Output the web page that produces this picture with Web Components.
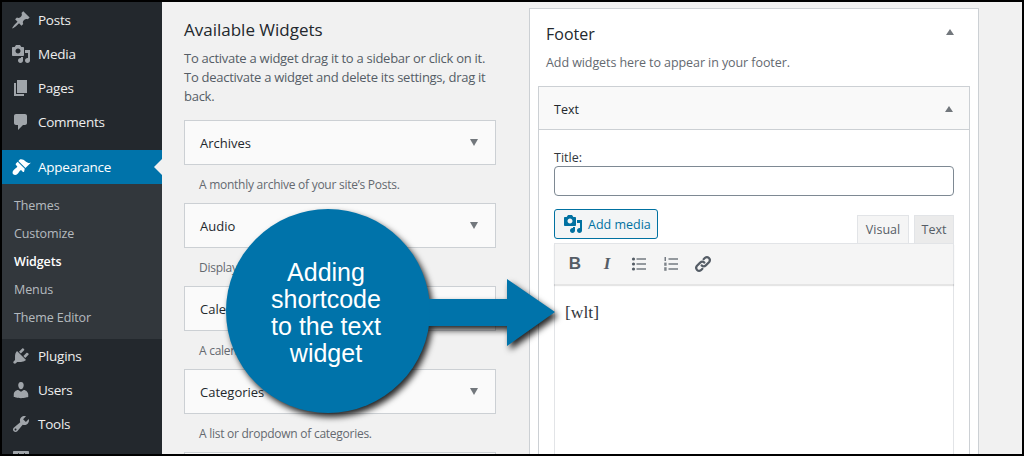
<!DOCTYPE html>
<html lang="en">
<head>
<meta charset="utf-8">
<title>Widgets</title>
<style>
  html, body { margin: 0; height: 456px; overflow: hidden; background: #000; }
  body { font-family: "Open Sans", "Noto Sans", sans-serif; font-size: 13px; }
</style>
</head>
<body>
<wp-frame>
  <wp-sidebar slot="side">
    <wp-menu-item icon="post">Posts</wp-menu-item>
    <wp-menu-item icon="media">Media</wp-menu-item>
    <wp-menu-item icon="page">Pages</wp-menu-item>
    <wp-menu-item icon="comments">Comments</wp-menu-item>
    <wp-menu-item icon="appearance" current>Appearance</wp-menu-item>
    <wp-submenu>
      <wp-sub-item>Themes</wp-sub-item>
      <wp-sub-item>Customize</wp-sub-item>
      <wp-sub-item active>Widgets</wp-sub-item>
      <wp-sub-item>Menus</wp-sub-item>
      <wp-sub-item>Theme Editor</wp-sub-item>
    </wp-submenu>
    <wp-menu-item icon="plugins">Plugins</wp-menu-item>
    <wp-menu-item icon="users">Users</wp-menu-item>
    <wp-menu-item icon="tools">Tools</wp-menu-item>
    <wp-menu-item icon="settings">Settings</wp-menu-item>
  </wp-sidebar>

  <wp-available slot="left">
    <widget-card name="Archives">A monthly archive of your site’s Posts.</widget-card>
    <widget-card name="Audio">Displays an audio player.</widget-card>
    <widget-card name="Calendar">A calendar of your site’s Posts.</widget-card>
    <widget-card name="Categories">A list or dropdown of categories.</widget-card>
    <widget-card name=""></widget-card>
  </wp-available>

  <footer-panel slot="right">
    <text-widget></text-widget>
  </footer-panel>

  <wp-callout slot="over">Adding<br>shortcode<br>to the text<br>widget</wp-callout>
</wp-frame>

<script>
const ICONS = {
  post: 'M10.44 3.02l1.82-1.82 6.36 6.35-1.83 1.82c-1.05-.68-2.48-.57-3.41.36l-.75.75c-.92.93-1.04 2.35-.35 3.41l-1.83 1.82-2.41-2.41-2.8 2.79c-.42.42-3.38 2.71-3.8 2.29s1.86-3.39 2.28-3.81l2.79-2.79L4.1 9.36l1.83-1.82c1.05.69 2.48.57 3.4-.36l.75-.75c.93-.92 1.05-2.35.36-3.41z',
  media: 'M13 11V4c0-.55-.45-1-1-1h-1.67L9 1H5L3.67 3H2c-.55 0-1 .45-1 1v7c0 .55.45 1 1 1h10c.55 0 1-.45 1-1zM7 4.5c1.38 0 2.5 1.12 2.5 2.5S8.38 9.5 7 9.5 4.5 8.38 4.5 7 5.62 4.5 7 4.5zM14 6h5v10.5c0 1.38-1.12 2.5-2.5 2.5S14 17.88 14 16.5s1.12-2.5 2.5-2.5c.17 0 .34.02.5.05V9h-3V6zm-4 8.05V13h2v3.5c0 1.38-1.12 2.5-2.5 2.5S7 17.88 7 16.5 8.12 14 9.5 14c.17 0 .34.02.5.05z',
  page: 'M6 15V2h10v13H6zm-1 1h8v2H3V5h2v11z',
  comments: 'M5 2h9c1.1 0 2 .9 2 2v7c0 1.1-.9 2-2 2h-2l-5 5v-5H5c-1.1 0-2-.9-2-2V4c0-1.1.9-2 2-2z',
  appearance: 'M14.48 11.06L7.41 3.99l1.5-1.5c.5-.56 2.3-.47 3.51.32 1.21.8 1.43 1.28 2.91 2.1 1.18.64 2.45 1.26 4.45.85zm-.71.71L6.7 4.7 4.93 6.47c-.39.39-.39 1.02 0 1.41l1.06 1.06c.39.39.39 1.03 0 1.42-.6.6-1.43 1.11-2.21 1.69-.35.26-.7.53-1.01.84-1.4 1.4-1.6 3.3-.5 4.4s3 .9 4.4-.5c.31-.31.58-.66.84-1.01.58-.78 1.09-1.61 1.69-2.21.39-.39 1.03-.39 1.42 0l1.06 1.06c.39.39 1.02.39 1.41 0z',
  plugins: 'M13.11 4.36L9.87 7.6 8 5.73l3.24-3.24c.35-.34 1.05-.2 1.56.32.52.51.66 1.21.31 1.55zm-8 1.77l.91-1.12 9.01 9.01-1.19.84c-.71.71-2.63 1.16-3.82 1.16H6.14L4.9 17.26c-.59.59-1.54.59-2.12 0-.59-.58-.59-1.53 0-2.12l1.24-1.24v-3.88c0-1.13.4-3.19 1.09-3.89zm7.26 3.97l3.24-3.24c.34-.35 1.04-.21 1.55.31.52.51.66 1.21.31 1.55l-3.24 3.25z',
  users: 'M10 9.25c-2.27 0-2.73-3.44-2.73-3.44C7 4.02 7.82 2 9.97 2c2.16 0 2.98 2.02 2.71 3.81 0 0-.41 3.44-2.68 3.44zm0 2.57L12.72 10c2.39 0 4.52 2.33 4.52 4.53v2.49s-3.65 1.13-7.24 1.13c-3.65 0-7.24-1.13-7.24-1.13v-2.49c0-2.25 1.94-4.48 4.47-4.48z',
  tools: 'M16.68 9.77c-1.34 1.34-3.3 1.67-4.95.99l-5.41 6.52c-.99.99-2.59.99-3.58 0s-.99-2.59 0-3.57l6.52-5.42c-.68-1.65-.35-3.61.99-4.95 1.28-1.28 3.12-1.62 4.72-1.06l-2.89 2.89 2.82 2.82 2.86-2.87c.53 1.58.18 3.39-1.08 4.65zM3.81 16.21c.4.39 1.04.39 1.43 0 .4-.4.4-1.04 0-1.43-.39-.4-1.03-.4-1.43 0-.39.39-.39 1.03 0 1.43z',
  settings: 'M18 16V4c0-.55-.45-1-1-1H3c-.55 0-1 .45-1 1v12c0 .55.45 1 1 1h14c.55 0 1-.45 1-1zM8 11h1c.55 0 1 .45 1 1s-.45 1-1 1H8v1.5c0 .28-.22.5-.5.5s-.5-.22-.5-.5V13H6c-.55 0-1-.45-1-1s.45-1 1-1h1V5.5c0-.28.22-.5.5-.5s.5.22.5.5V11zm5-2h-1c-.55 0-1-.45-1-1s.45-1 1-1h1V5.5c0-.28.22-.5.5-.5s.5.22.5.5V7h1c.55 0 1 .45 1 1s-.45 1-1 1h-1v5.5c0 .28-.22.5-.5.5s-.5-.22-.5-.5V9z'
};

function define(tag, css, html, init) {
  customElements.define(tag, class extends HTMLElement {
    constructor() {
      super();
      this.attachShadow({ mode: 'open' }).innerHTML = `<style>${css}</style>${html}`;
      if (init) init(this);
    }
  });
}

// page frame: black edge, sidebar, then the two columns
define('wp-frame', `
  :host { display: grid; grid-template-columns: 160px 1fr; width: 1024px; height: 456px; box-sizing: border-box;
    border: 2px solid #000; overflow: hidden; position: relative; background: #f1f1f1; }
  .main { display: flex; gap: 33px; padding: 0 0 0 22px; min-width: 0; height: 452px; overflow: hidden; }
`, `
  <slot name="side"></slot>
  <div class="main"><slot name="left"></slot><slot name="right"></slot></div>
  <slot name="over"></slot>
`);

define('wp-sidebar', `
  :host { display: block; background: #23282d; padding-top: 1px; height: 451px; overflow: hidden; }
`, `<slot></slot>`);

define('wp-menu-item', `
  :host { display: flex; align-items: center; height: 34px; color: #eee; font-size: 13.5px; letter-spacing: -.25px; position: relative; }
  :host([current]) { background: #0073aa; color: #fff; margin-top: 11px; }
  svg { width: 20px; height: 20px; margin: 0 7px 0 9px; fill: #a0a5aa; flex: none; }
  :host([current]) svg { fill: #fff; }
  .notch { display: none; position: absolute; right: 0; top: 9px; border: 8px solid transparent; border-right-color: #f1f1f1; border-left-width: 0; }
  :host([current]) .notch { display: block; }
`, `<svg viewBox="0 0 20 20"><path></path></svg><slot></slot><span class="notch"></span>`,
  el => el.shadowRoot.querySelector('path').setAttribute('d', ICONS[el.getAttribute('icon')]));

define('wp-submenu', `
  :host { display: block; background: #32373c; padding: 7px 0 8px; }
`, `<slot></slot>`);

define('wp-sub-item', `
  :host { display: flex; align-items: center; height: 28px; padding-left: 12px; font-size: 12.5px; letter-spacing: -.1px; color: rgba(240,245,250,.7); }
  :host([active]) { color: #fff; font-weight: 600; }
`, `<slot></slot>`);

define('wp-available', `
  :host { display: block; width: 312px; flex: none; padding-top: 16px; color: #444; }
  h2 { margin: 0; font-size: 17px; line-height: 24px; font-weight: 500; color: #23282d; }
  p { margin: 7px 0 14px; line-height: 19px; font-size: 13px; letter-spacing: -.27px; color: #555d66; white-space: nowrap; }
`, `
  <h2>Available Widgets</h2>
  <p>To activate a widget drag it to a sidebar or click on it.<br>To deactivate a widget and delete its settings, drag it<br>back.</p>
  <slot></slot>
`);

define('widget-card', `
  :host { display: block; height: 83px; }
  .box { display: flex; align-items: center; justify-content: space-between; height: 45px; box-sizing: border-box;
    border: 1px solid #ccd0d4; background: #fafafa; padding: 0 17px 0 15px; font-size: 13px; font-weight: 500; color: #23282d; }
  .arrow { border: 4px solid transparent; border-top: 7px solid #72777c; border-bottom: 0; }
  .desc { padding: 10px 0 0 15px; line-height: 20px; font-size: 12px; letter-spacing: -.26px; color: #646970; }
`, `
  <div class="box"><span class="name"></span><span class="arrow"></span></div>
  <div class="desc"><slot></slot></div>
`, el => { el.shadowRoot.querySelector('.name').textContent = el.getAttribute('name'); });

define('footer-panel', `
  :host { display: block; width: 450px; height: 446px; margin-top: 6px; box-sizing: border-box; flex: none;
    border: 1px solid #ccd0d4; border-bottom: 0; background: #fff; padding: 0 8px; overflow: hidden; }
  .head { display: flex; align-items: center; justify-content: space-between; height: 24px; padding: 13px 16px 0 8px;
    font-size: 16px; font-weight: 500; color: #23282d; }
  .arrow { border: 4px solid transparent; border-bottom: 6px solid #72777c; border-top: 0; margin-top: -4px; }
  p { margin: 7px 0 13px 8px; line-height: 20px; font-size: 12.5px; letter-spacing: -.08px; color: #646970; }
`, `
  <div class="head"><span>Footer</span><span class="arrow"></span></div>
  <p>Add widgets here to appear in your footer.</p>
  <slot></slot>
`);

define('text-widget', `
  :host { display: block; border: 1px solid #ccd0d4; border-bottom: 0; height: 400px; width: 432px; box-sizing: border-box; }
  .head { display: flex; align-items: center; justify-content: space-between; height: 43px; box-sizing: border-box; padding: 2px 16px 0 15px;
    border-bottom: 1px solid #ccd0d4; background: #f9f9f9; margin-bottom: 1px; font-size: 12.5px; font-weight: 500; color: #23282d; }
  .arrow { border: 4px solid transparent; border-bottom: 6px solid #72777c; border-top: 0; }
  .body { padding: 18px 15px 0; }
  label { display: block; font-size: 12.5px; line-height: 17px; color: #32373c; }
  .input { height: 30px; box-sizing: border-box; border: 1px solid #7e8993; border-radius: 4px; background: #fff; margin-bottom: 13px; }
`, `
  <div class="head"><span>Text</span><span class="arrow"></span></div>
  <div class="body">
    <label>Title:</label>
    <div class="input"></div>
    <tiny-editor></tiny-editor>
  </div>
`);

define('tiny-editor', `
  :host { display: block; }
  .top { display: flex; justify-content: space-between; height: 34px; }
  .add { display: flex; align-items: center; gap: 5px; width: 104px; height: 30px; box-sizing: border-box; padding-left: 8px;
    border: 1px solid #0071a1; border-radius: 3px; background: #f3f5f6; color: #0071a1; font-size: 12.5px; }
  .add svg { width: 20px; height: 20px; fill: #0071a1; flex: none; }
  .tabs { display: flex; align-items: flex-end; gap: 5px; }
  .tab { height: 28px; box-sizing: border-box; display: flex; align-items: center; justify-content: center;
    border: 1px solid #e2e4e7; border-bottom: 0; font-size: 12.5px; color: #555d66; background: #ebebeb; }
  .tab.on { width: 52px; background: #f5f5f5; }
  .tab.off { width: 40px; }
  .bar { display: flex; align-items: center; height: 41px; box-sizing: border-box; padding-left: 4px; background: #f5f5f5;
    border: 1px solid #e2e4e7; border-bottom: 0; box-shadow: 0 2px 1px rgba(0,0,0,.1); position: relative; }
  .bar > * { width: 32px; display: flex; justify-content: center; color: #555d66; }
  .b { font: 700 17px "Liberation Sans", sans-serif; }
  .i { font: italic 700 17px "Liberation Serif", serif; }
  .bar svg { width: 20px; height: 20px; }
  .edit { height: 200px; padding: 18px 10px; border: solid #e2e4e7; border-width: 0 1px; background: #fff;
    font: 17.5px/20px "Liberation Serif", serif; color: #32373c; }
`, `
  <div class="top">
    <div class="add"><svg viewBox="0 0 20 20"><path d="${ICONS.media}"></path></svg><span>Add media</span></div>
    <div class="tabs"><div class="tab on">Visual</div><div class="tab off">Text</div></div>
  </div>
  <div class="bar">
    <span class="b">B</span>
    <span class="i">I</span>
    <span><svg viewBox="0 0 20 20" fill="#555d66"><circle cx="4.5" cy="5" r="1.6"/><circle cx="4.5" cy="10" r="1.6"/><circle cx="4.5" cy="15" r="1.6"/><rect x="7.5" y="4.4" width="9.5" height="1.2"/><rect x="7.5" y="9.4" width="9.5" height="1.2"/><rect x="7.5" y="14.4" width="9.5" height="1.2"/></svg></span>
    <span><svg viewBox="0 0 20 20" fill="#555d66"><rect x="3.6" y="3" width="1.2" height="4"/><rect x="3.2" y="8.6" width="2.4" height="3.2" opacity=".75"/><rect x="3.2" y="13.2" width="2.4" height="3.6" opacity=".75"/><rect x="7.5" y="4.4" width="9.5" height="1.2"/><rect x="7.5" y="9.4" width="9.5" height="1.2"/><rect x="7.5" y="14.4" width="9.5" height="1.2"/></svg></span>
    <span><svg viewBox="0 0 20 20" fill="none" stroke="#555d66" stroke-width="2.2" stroke-linecap="round"><path d="M8.6 11.4a3 3 0 0 0 4.2 0l3.4-3.4a3 3 0 0 0-4.2-4.2l-1.4 1.4"/><path d="M11.4 8.6a3 3 0 0 0-4.2 0l-3.4 3.4a3 3 0 0 0 4.2 4.2l1.4-1.4"/></svg></span>
  </div>
  <div class="edit">[wlt]</div>
`);

// blue annotation laid over the screenshot
define('wp-callout', `
  :host { position: absolute; left: 224px; top: 207px; width: 340px; height: 220px; color: #fff;
    font: 25px/27px "Liberation Sans", sans-serif; }
  svg { position: absolute; left: 0; top: 0; width: 340px; height: 220px; overflow: visible; filter: drop-shadow(3px 4px 3px rgba(0,0,0,.85)); }
  .t { position: absolute; left: 0; top: 0; width: 204px; height: 204px; box-sizing: border-box; padding: 4px 4px 0 0;
    display: flex; align-items: center; justify-content: center; text-align: center; }
`, `
  <svg viewBox="0 0 340 220"><path fill="#0073aa" d="M190 90H281V70L329 103 281 137V117H190Z"/><circle cx="102" cy="102" r="102" fill="#0073aa"/></svg>
  <div class="t"><div><slot></slot></div></div>
`);
</script>
</body>
</html>
